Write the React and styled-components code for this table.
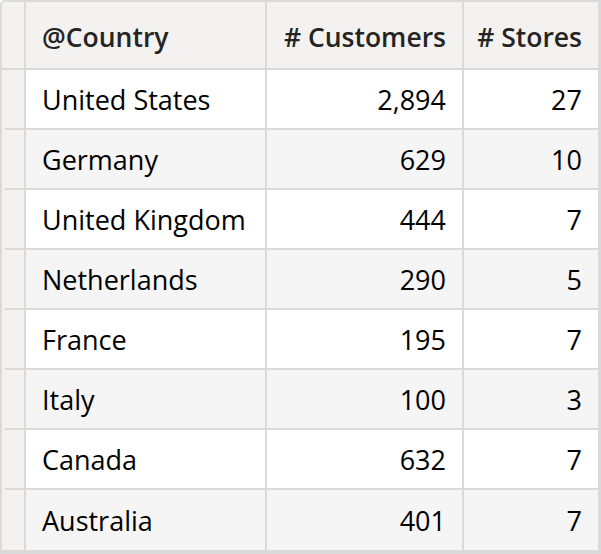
import React from 'react';
import styled, { createGlobalStyle } from 'styled-components';

const GlobalStyle = createGlobalStyle`
  html, body {
    margin: 0;
    padding: 0;
    background: #fff;
  }
`;

const rows = [
  { country: 'United States', customers: '2,894', stores: '27' },
  { country: 'Germany', customers: '629', stores: '10' },
  { country: 'United Kingdom', customers: '444', stores: '7' },
  { country: 'Netherlands', customers: '290', stores: '5' },
  { country: 'France', customers: '195', stores: '7' },
  { country: 'Italy', customers: '100', stores: '3' },
  { country: 'Canada', customers: '632', stores: '7' },
  { country: 'Australia', customers: '401', stores: '7' },
];

const Frame = styled.div`
  width: 601px;
  height: 554px;
  box-sizing: border-box;
  border-style: solid;
  border-color: #dadada;
  border-width: 2px 3px 4px 2px;
  border-top-left-radius: 5px;
  overflow: hidden;
  font-family: "Open Sans", "Noto Sans", sans-serif;
`;

const Row = styled.div`
  display: grid;
  grid-template-columns: 24px 241px 197px 134px;
  height: ${(p) => (p.header ? '68px' : '60px')};
  background: ${(p) => (p.header ? '#f3f2f1' : p.striped ? '#f5f5f5' : '#fff')};
  border-bottom: ${(p) => (p.header ? '2px solid #dadada' : 'none')};
  box-sizing: border-box;
`;

const Gutter = styled.div`
  position: relative;
  background: #f3f2f1;
  border-right: 2px solid #dadada;

  &::after {
    content: '';
    display: ${(p) => (p.last ? 'none' : 'block')};
    position: absolute;
    left: 3px;
    right: 0;
    bottom: 0;
    height: 2px;
    background: #dadada;
  }
`;

const Cell = styled.div`
  display: flex;
  align-items: center;
  justify-content: ${(p) => (p.right ? 'flex-end' : 'flex-start')};
  padding: ${(p) => (p.right ? '0 16px 0 0' : '0 0 0 16px')};
  border-right: ${(p) => (p.edge ? 'none' : '2px solid #dadada')};
  border-bottom: ${(p) => (p.last ? 'none' : '2px solid #dadada')};
  box-sizing: border-box;
  font-size: 27px;
  color: #000;
  white-space: nowrap;
`;

const HeadCell = styled(Cell)`
  border-bottom: none;
  font-weight: 600;
  font-size: 26.5px;
  color: #252423;
  padding-top: 4px;
`;

export default function App() {
  return (
    <>
      <GlobalStyle />
      <Frame>
        <Row header>
          <Gutter last />
          <HeadCell>@Country</HeadCell>
          <HeadCell right># Customers</HeadCell>
          <HeadCell right edge># Stores</HeadCell>
        </Row>
        {rows.map((r, i) => {
          const last = i === rows.length - 1;
          return (
            <Row key={r.country} striped={i % 2 === 1}>
              <Gutter last={last} />
              <Cell last={last}>{r.country}</Cell>
              <Cell right last={last}>{r.customers}</Cell>
              <Cell right edge last={last}>{r.stores}</Cell>
            </Row>
          );
        })}
      </Frame>
    </>
  );
}
